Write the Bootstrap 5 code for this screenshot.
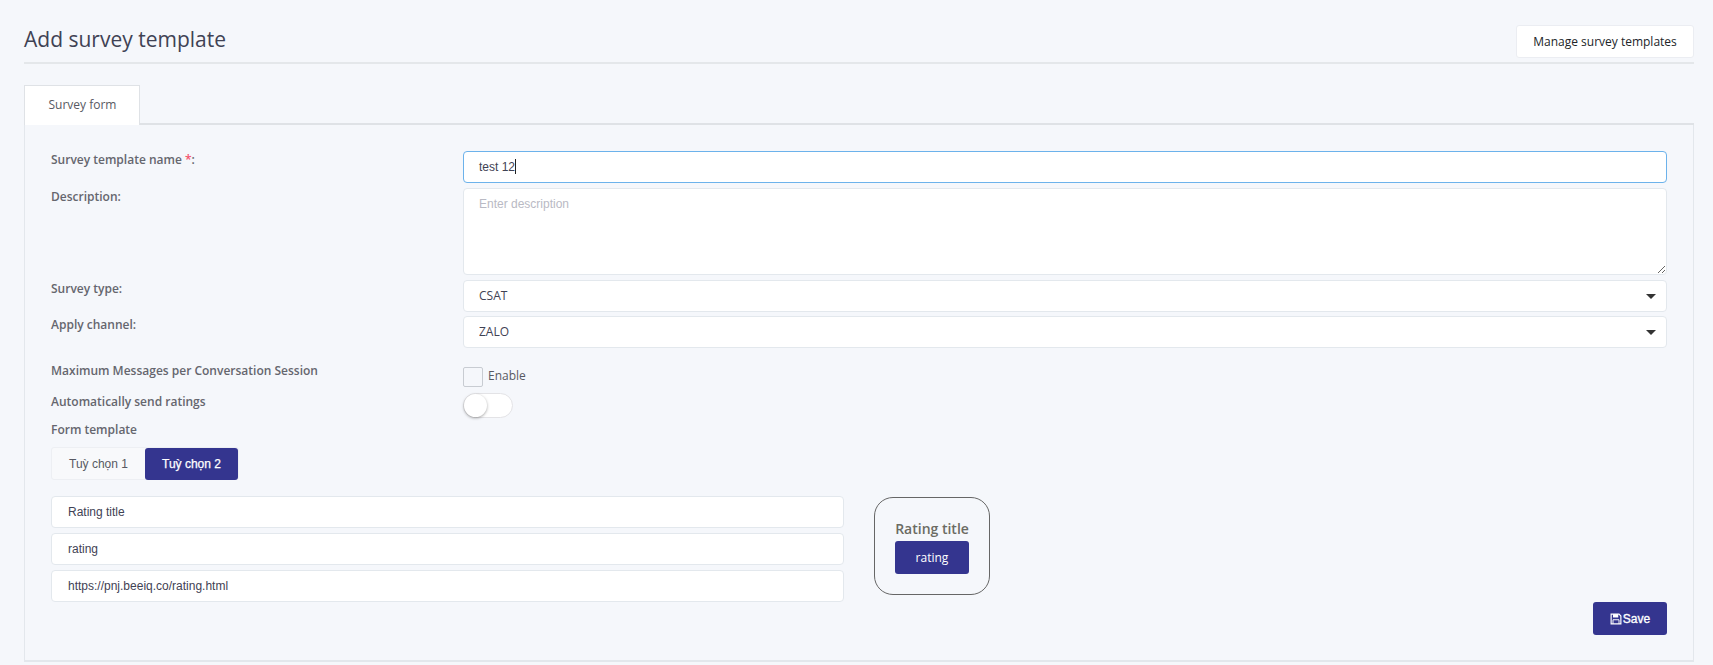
<!DOCTYPE html>
<html lang="en">
<head>
<meta charset="utf-8">
<title>Add survey template</title>
<link href="https://cdn.jsdelivr.net/npm/bootstrap@5.3.0/dist/css/bootstrap.min.css" rel="stylesheet">
<style>
html,body{height:100%}
body{background:#f5f7fb;font-family:"Open Sans",sans-serif;font-size:13px;color:#575962;overflow:hidden}
.page-wrap{padding:25px 19px 0 24px}
.head-bar{height:39px;border-bottom:2px solid #e4e7ea;align-items:flex-start;justify-content:space-between}
.page-title{font-size:21px;font-weight:400;line-height:28px;margin:0;color:#3f4254}
.btn-manage{width:178px;height:33px;padding:0;background:#fff;border:1px solid #ebedf2;border-radius:3px;font-size:12px;font-weight:400;color:#212529;font-family:"Open Sans",sans-serif}
.tabs-row{margin-top:21px;height:40px;border-bottom:2px solid #dfe2e6}
.tab-item{width:116px;height:40px;background:#fff;border:1px solid #dfe2e6;border-bottom:0;display:flex;align-items:center;justify-content:center;font-size:12px;font-weight:400;color:#575962;padding:0 0 1px 1px;box-sizing:border-box;position:relative;margin-bottom:-2px}
.tab-body{height:537px;border:solid #e3e7ec;border-width:0 1px 2px 1px;padding:26px 26px 0 26px}
.field-row{display:flex;align-items:flex-start}
.field-label{width:412px;flex:none;font-weight:600;font-size:12px;line-height:18px;color:#65666e;margin:0}
.field-control{flex:1 1 auto;min-width:0}
.req{color:#f4516c}
.input-plain.form-control,.input-plain.form-select{height:32px;border:1px solid #e3e8ed;border-radius:4px;font-family:"Liberation Sans",sans-serif;font-size:12px;line-height:18px;color:#495057;padding:6px 15px;background-color:#fff;box-shadow:none}
.input-focus.form-control{border-color:#6cb2eb;color:#3f4254}
.caret-bar{display:inline-block;width:1px;height:15px;background:#222;vertical-align:-3px}
.area-plain.form-control{height:87px;border:1px solid #e3e8ed;border-radius:4px;font-family:"Liberation Sans",sans-serif;font-size:12px;padding:6px 15px;background:#fff;box-shadow:none}
.area-plain.form-control::placeholder{color:#b9bac4}
.input-plain.form-select{font-family:"Open Sans",sans-serif;color:#3f4254;background-image:url("data:image/svg+xml,%3Csvg xmlns='http://www.w3.org/2000/svg' width='10' height='5'%3E%3Cpath d='M0 0h10L5 5z' fill='%23333'/%3E%3C/svg%3E");background-size:10px 5px;background-position:right 10px center}
.check-wrap{margin-top:5px}
.check-box{width:20px;height:20px;border:1px solid #c8ccd2;border-radius:2px;background:#f5f7fb;display:block}
.check-text{font-size:12px;color:#575962;margin-left:5px;padding-bottom:2px}
.toggle-track{width:50px;height:25px;border:1px solid #e3e3e6;border-radius:13px;background:#fff;position:relative;display:block}
.toggle-knob{position:absolute;left:0;top:0;width:23px;height:23px;border-radius:50%;background:#fff;box-shadow:0 1px 3px rgba(0,0,0,.35)}
.opt-group{display:flex;width:fit-content;background:#f8f9fb;border:1px solid #edeff3;border-radius:3px;height:33px}
.opt-btn{height:31px;border:0;background:transparent;font-family:"Liberation Sans",sans-serif;font-size:12px;color:#575962;padding:0;width:93px;border-radius:3px}
.opt-on{background:#34358f;color:#fff;height:32px;-webkit-text-stroke:.25px #fff}
.form-side{width:793px;flex:none;display:flex;flex-direction:column;gap:5px}
.mini-input.form-control{height:32px;border:1px solid #e3e8ed;border-radius:4px;font-family:"Liberation Sans",sans-serif;font-size:12px;color:#3f4254;padding:6px 16px;background:#fff;box-shadow:none}
.preview-box{width:116px;height:98px;margin:1px 0 0 30px;padding-top:2px;border:1px solid #666;border-radius:19px;display:flex;flex-direction:column;align-items:center;justify-content:center}
.preview-title{font-size:14px;font-weight:600;line-height:18px;color:#6b6b63;margin-bottom:3px}
.preview-btn{width:74px;height:33px;background:#34358f;color:#fff;border:0;border-radius:3px;font-size:12px;font-family:"Open Sans",sans-serif;padding:0}
.save-row{display:flex;justify-content:flex-end}
.save-btn{width:74px;height:33px;background:#34358f;color:#fff;border:0;border-radius:3px;font-family:"Liberation Sans",sans-serif;font-size:12px;padding:0;display:flex;align-items:center;justify-content:center;gap:1px;-webkit-text-stroke:.35px #fff}
</style>
</head>
<body>
<div class="page-wrap">
  <div class="head-bar d-flex">
    <h1 class="page-title">Add survey template</h1>
    <button class="btn btn-manage" type="button">Manage survey templates</button>
  </div>
  <div class="tabs-row"><div class="tab-item">Survey form</div></div>
  <div class="tab-body">
    <div class="field-row" style="margin-bottom:5px">
      <label class="field-label">Survey template name <span class="req">*</span>:</label>
      <div class="field-control"><div class="form-control input-plain input-focus">test 12<span class="caret-bar"></span></div></div>
    </div>
    <div class="field-row" style="margin-bottom:5px">
      <label class="field-label">Description:</label>
      <div class="field-control"><textarea class="form-control area-plain" placeholder="Enter description"></textarea></div>
    </div>
    <div class="field-row" style="margin-bottom:4px">
      <label class="field-label">Survey type:</label>
      <div class="field-control"><select class="form-select input-plain"><option>CSAT</option></select></div>
    </div>
    <div class="field-row" style="margin-bottom:14px">
      <label class="field-label">Apply channel:</label>
      <div class="field-control"><select class="form-select input-plain"><option>ZALO</option></select></div>
    </div>
    <div class="field-row" style="margin-bottom:6px">
      <label class="field-label">Maximum Messages per Conversation Session</label>
      <div class="field-control check-wrap d-flex align-items-center"><span class="check-box"></span><span class="check-text">Enable</span></div>
    </div>
    <div class="field-row" style="height:27px">
      <label class="field-label">Automatically send ratings</label>
      <div class="field-control"><span class="toggle-track"><span class="toggle-knob"></span></span></div>
    </div>
    <div class="field-label w-auto" style="margin-bottom:8px;padding-top:1px">Form template</div>
    <div class="opt-group"><button class="opt-btn" type="button">Tuỳ chọn 1</button><button class="opt-btn opt-on" type="button">Tuỳ chọn 2</button></div>
    <div class="d-flex" style="margin-top:16px">
      <div class="form-side">
        <input class="form-control mini-input" value="Rating title">
        <input class="form-control mini-input" value="rating">
        <input class="form-control mini-input" value="https://pnj.beeiq.co/rating.html">
      </div>
      <div class="preview-box">
        <div class="preview-title">Rating title</div>
        <button class="preview-btn" type="button">rating</button>
      </div>
    </div>
    <div class="save-row">
      <button class="save-btn" type="button"><svg width="12" height="12" viewBox="0 0 16 16" aria-hidden="true"><path fill="none" stroke="#fff" stroke-width="1.6" d="M1.5 1.5h10.5l2.500 2.500v10.500h-13z"/><path fill="#fff" d="M4 1.500h7v4.500h-7z"/><path fill="none" stroke="#fff" stroke-width="1.300" d="M4 14.500v-5.500h8v5.500"/></svg>Save</button>
    </div>
  </div>
</div>
<script src="https://cdn.jsdelivr.net/npm/bootstrap@5.3.0/dist/js/bootstrap.bundle.min.js"></script>
</body>
</html>
